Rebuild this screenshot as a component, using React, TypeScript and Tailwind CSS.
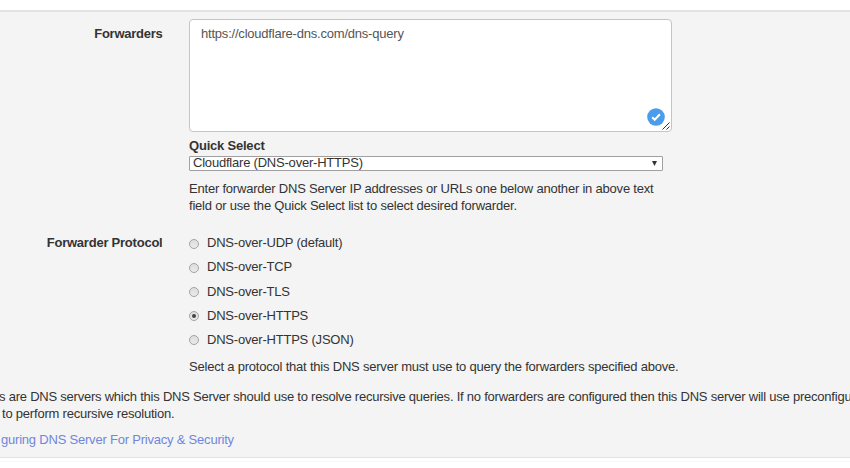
const protocols = [
  { label: 'DNS-over-UDP (default)', checked: false },
  { label: 'DNS-over-TCP', checked: false },
  { label: 'DNS-over-TLS', checked: false },
  { label: 'DNS-over-HTTPS', checked: true },
  { label: 'DNS-over-HTTPS (JSON)', checked: false },
];

function Radio({ checked }: { checked: boolean }) {
  return (
    <span className="mt-[5px] flex size-[10px] shrink-0 items-center justify-center rounded-full border border-[#a3a3a3] bg-linear-to-b from-[#dddddd] to-[#ebebeb]">
      {checked && <span className="size-1 rounded-full bg-[#444]" />}
    </span>
  );
}

export default function App() {
  return (
    <div className="h-[468px] w-[850px] overflow-hidden bg-white pt-[10px] font-['Liberation_Sans',Arial,sans-serif] text-[13px] leading-[17px] tracking-[-0.21px] text-[#333]">
      <section className="h-[448px] border-t-2 border-b border-[#e3e3e3] bg-[#f4f4f4] pt-[7px]">
        <div className="flex h-[215px]">
          <label className="w-[162.5px] pt-[6px] text-right font-bold tracking-[-0.25px]">Forwarders</label>
          <div className="ml-[26.5px]">
            <div className="relative h-[113px] w-[483px] rounded-[4px] border border-[#c4c4c4] bg-white pt-[5px] pl-[11px] text-[#555]">
              https://cloudflare-dns.com/dns-query
              <svg className="absolute right-[6px] bottom-[5px]" width="18" height="18" viewBox="0 0 18 18">
                <circle cx="9" cy="9" r="8.8" fill="#4a9cec" />
                <path d="M5.2 9.3 7.7 11.8l5.2-5.6" fill="none" stroke="white" strokeWidth="2" />
              </svg>
              <svg className="absolute right-px bottom-px" width="8" height="8" viewBox="0 0 8 8">
                <path d="M.5 7.5l7-7M4.5 7.5l3-3" stroke="#333" strokeWidth="1" />
              </svg>
            </div>
            <div className="mt-[5px] font-bold">Quick Select</div>
            <div className="mt-[2px] flex h-[15px] w-[474px] items-center justify-between rounded-[1px] border border-[#a0a0a0] bg-white pr-[5px] pl-[3px] leading-[13px]">
              <span className="-mt-[2px]">Cloudflare (DNS-over-HTTPS)</span>
              <svg width="5" height="5" viewBox="0 0 5 5">
                <path d="M0 0h5L2.5 5z" fill="#333" />
              </svg>
            </div>
            <p className="mt-[9px] whitespace-nowrap">
              Enter forwarder DNS Server IP addresses or URLs one below another in above text
              <br />
              field or use the Quick Select list to select desired forwarder.
            </p>
          </div>
        </div>
        <div className="flex h-[154px]">
          <label className="w-[162.5px] text-right font-bold tracking-[-0.23px]">Forwarder Protocol</label>
          <div className="ml-[26.5px]">
            <div className="flex h-[124px] flex-col">
              {protocols.map(({ label, checked }) => (
                <label key={label} className="flex h-[24.1px] gap-2">
                  <Radio checked={checked} />
                  <span className="pt-[0.35px]">{label}</span>
                </label>
              ))}
            </div>
            <p>Select a protocol that this DNS server must use to query the forwarders specified above.</p>
          </div>
        </div>
        <p className="-ml-px whitespace-nowrap">
          <span className="tracking-[-0.228px]">
            s are DNS servers which this DNS Server should use to resolve recursive queries. If no forwarders are configured then this DNS server will use preconfigu
          </span>
          <br />
          <span className="ml-[3px]">to perform recursive resolution.</span>
        </p>
        <a className="mt-[9px] ml-px block text-[#7186dd]">guring DNS Server For Privacy &amp; Security</a>
      </section>
      <div className="mt-[3px] h-px bg-[#f8f8f8]" />
    </div>
  );
}
